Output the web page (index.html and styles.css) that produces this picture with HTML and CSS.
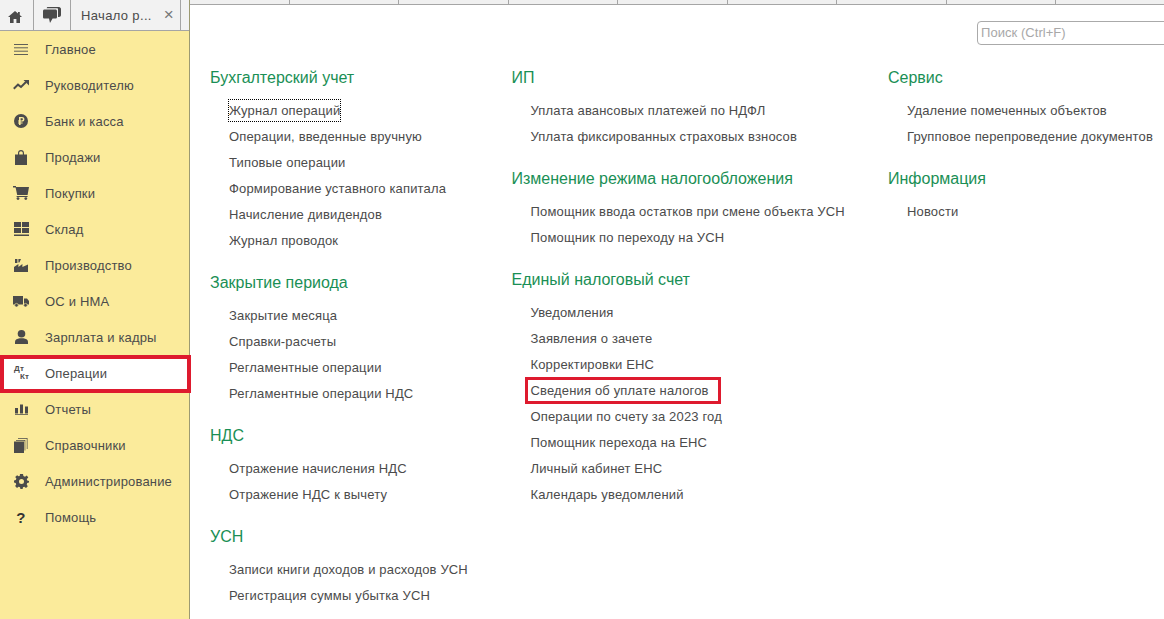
FILE: index.html
```html
<!DOCTYPE html>
<html lang="ru">
<head>
<meta charset="utf-8">
<title>Начало работы</title>
<link rel="stylesheet" href="styles.css">
</head>
<body>
<div class="app">
  <aside class="left">
    <div class="tabs">
      <div class="tab tab-home"><svg width="14" height="12" viewBox="0 0 14 12"><path d="M7 0 0 6H2V12H5.6V8H8.4V12H12V6H14L11.8 4.1V1H10V2.6Z"/></svg></div>
      <div class="tab tab-chat"><svg width="18" height="16" viewBox="0 0 18 16"><path d="M5 0H16C17 0 18 1 18 2V8C18 9 17 10 16 10H15V2.2C15 1.6 14.6 1.2 14 1.2H3.6C3.8 .5 4.3 0 5 0Z"/><path d="M1.6 2.4H12.4C13.4 2.4 14 3 14 4V10C14 11 13.4 11.6 12.4 11.6H9.6L7 16 6 11.6H1.6C.6 11.6 0 11 0 10V4C0 3 .6 2.4 1.6 2.4Z"/></svg></div>
      <div class="tab tab-page"><span>Начало р...</span><span class="tab-close">×</span></div>
    </div>
    <nav class="nav">
      <a class="nav-item"><span class="nav-icon"><svg width="14" height="11" viewBox="0 0 14 11"><path d="M0 .5H14M0 3.8H14M0 7.2H14M0 10.5H14" stroke="#5f5f58" fill="none"/></svg></span>Главное</a>
      <a class="nav-item"><span class="nav-icon"><svg width="16" height="10" viewBox="0 0 16 10"><path d="M.8 8.8 5 4.6 8 7 13 2" fill="none" stroke="#4b4b4b" stroke-width="2"/><path d="M10.5 0H16V5.5Z"/></svg></span>Руководителю</a>
      <a class="nav-item"><span class="nav-icon"><svg width="14" height="14" viewBox="0 0 14 14"><path fill-rule="evenodd" d="M7 0A7 7 0 1 1 7 14 7 7 0 0 1 7 0ZM5 3V6.4H4V7.6H5V8.4H4V9.6H5V11H6.6V9.6H8.6V8.4H6.6V7.6H8C9.5 7.6 10.4 6.7 10.4 5.3 10.4 3.9 9.5 3 8 3ZM6.6 4.3H7.8C8.5 4.3 8.9 4.7 8.9 5.3 8.9 6 8.5 6.4 7.8 6.4H6.6Z"/></svg></span>Банк и касса</a>
      <a class="nav-item"><span class="nav-icon"><svg width="12" height="15" viewBox="0 0 12 15"><path fill-rule="evenodd" d="M0 4.5H3V3C3 1.2 4.2 0 6 0S9 1.2 9 3V4.5H12V15H0ZM4.2 4.5H7.8V3C7.8 2 7 1.2 6 1.2S4.2 2 4.2 3Z"/></svg></span>Продажи</a>
      <a class="nav-item"><span class="nav-icon"><svg width="16" height="14" viewBox="0 0 16 14"><path d="M0 0H3V1H16L14.6 9H4.2L2.6 1.4H0Z"/><path d="M3.6 10H14.6V11H3.6Z"/><circle cx="5" cy="12.6" r="1.4"/><circle cx="12.8" cy="12.6" r="1.4"/></svg></span>Покупки</a>
      <a class="nav-item"><span class="nav-icon"><svg width="15" height="14" viewBox="0 0 15 14"><path d="M0 0H7V5H0ZM8 0H15V5H8ZM0 6H7V11H0ZM8 6H15V11H8ZM0 12.5H15V14H0Z"/></svg></span>Склад</a>
      <a class="nav-item"><span class="nav-icon"><svg width="14" height="13" viewBox="0 0 14 13"><path d="M1 0H3.4V4H1ZM4.4 0H7L5.4 3.4H4.4ZM0 13V8L4.4 5V8L8.4 5V8L14 5.6V13Z"/></svg></span>Производство</a>
      <a class="nav-item"><span class="nav-icon"><svg width="16" height="11" viewBox="0 0 16 11"><path d="M0 0H10V8.6H0ZM11 2.5H14L16 5V8.6H11Z"/><circle cx="3.5" cy="9.2" r="1.8" stroke="#fbeb9b" stroke-width=".6"/><circle cx="12.5" cy="9.2" r="1.8" stroke="#fbeb9b" stroke-width=".6"/></svg></span>ОС и НМА</a>
      <a class="nav-item"><span class="nav-icon"><svg width="13" height="14" viewBox="0 0 13 14"><circle cx="6.5" cy="3.8" r="3.8"/><path d="M0 14V11.5C0 9.6 2.5 8.6 4.5 8.2H8.5C10.5 8.6 13 9.6 13 11.5V14Z"/></svg></span>Зарплата и кадры</a>
      <a class="nav-item nav-active"><span class="nav-icon nav-dtkt"><span>Дт</span><span class="kt">Кт</span></span>Операции</a>
      <a class="nav-item"><span class="nav-icon"><svg width="13" height="12" viewBox="0 0 13 12"><path d="M0 5H3V10.5H0ZM5 1.5H8V10.5H5ZM10 3.5H13V10.5H10ZM0 11.2H13V12H0Z"/></svg></span>Отчеты</a>
      <a class="nav-item"><span class="nav-icon"><svg width="14" height="15" viewBox="0 0 14 15"><path d="M0 3.5H10V15H0Z"/><path d="M2 2H11.3V12.5H10.6V2.7H2ZM4 0H13.5V11H12.8V.7H4Z"/></svg></span>Справочники</a>
      <a class="nav-item"><span class="nav-icon"><svg width="15" height="15" viewBox="0 0 15 15"><path fill-rule="evenodd" d="M6 0H9L9.4 2 11 2.7 12.8 1.6 14.3 3.6 12.8 5 13.2 6.5 15 7V8.4L13.2 9 12.7 10.5 13.8 12.2 12 14 10.3 12.8 9 13.3 8.6 15H6.4L6 13.3 4.6 12.7 3 13.9 1.1 12 2.2 10.4 1.7 9 0 8.6V6.5L1.8 6 2.4 4.6 1.2 3 3.1 1.2 4.6 2.3 5.7 1.9ZM7.5 5A2.5 2.5 0 1 0 7.5 10 2.5 2.5 0 0 0 7.5 5Z"/></svg></span>Администрирование</a>
      <a class="nav-item"><span class="nav-icon nav-q">?</span>Помощь</a>
    </nav>
  </aside>
  <main class="main">
    <div class="strip">
      <i></i><i></i><i></i><i></i><i></i><i></i><i></i><i></i><i></i>
    </div>
    <div class="search-row"><div class="search">Поиск (Ctrl+F)</div></div>
    <div class="columns">
      <div class="col">
        <section class="group"><h2>Бухгалтерский учет</h2>
          <a class="link"><span class="focus">Журнал операций</span></a>
          <a class="link">Операции, введенные вручную</a>
          <a class="link">Типовые операции</a>
          <a class="link">Формирование уставного капитала</a>
          <a class="link">Начисление дивидендов</a>
          <a class="link">Журнал проводок</a>
        </section>
        <section class="group"><h2>Закрытие периода</h2>
          <a class="link">Закрытие месяца</a>
          <a class="link">Справки-расчеты</a>
          <a class="link">Регламентные операции</a>
          <a class="link">Регламентные операции НДС</a>
        </section>
        <section class="group"><h2>НДС</h2>
          <a class="link">Отражение начисления НДС</a>
          <a class="link">Отражение НДС к вычету</a>
        </section>
        <section class="group"><h2>УСН</h2>
          <a class="link">Записи книги доходов и расходов УСН</a>
          <a class="link">Регистрация суммы убытка УСН</a>
        </section>
      </div>
      <div class="col">
        <section class="group"><h2>ИП</h2>
          <a class="link">Уплата авансовых платежей по НДФЛ</a>
          <a class="link">Уплата фиксированных страховых взносов</a>
        </section>
        <section class="group"><h2>Изменение режима налогообложения</h2>
          <a class="link">Помощник ввода остатков при смене объекта УСН</a>
          <a class="link">Помощник по переходу на УСН</a>
        </section>
        <section class="group"><h2>Единый налоговый счет</h2>
          <a class="link">Уведомления</a>
          <a class="link">Заявления о зачете</a>
          <a class="link">Корректировки ЕНС</a>
          <a class="link"><span class="marked">Сведения об уплате налогов</span></a>
          <a class="link">Операции по счету за 2023 год</a>
          <a class="link">Помощник перехода на ЕНС</a>
          <a class="link">Личный кабинет ЕНС</a>
          <a class="link">Календарь уведомлений</a>
        </section>
      </div>
      <div class="col">
        <section class="group"><h2>Сервис</h2>
          <a class="link">Удаление помеченных объектов</a>
          <a class="link">Групповое перепроведение документов</a>
        </section>
        <section class="group"><h2>Информация</h2>
          <a class="link">Новости</a>
        </section>
      </div>
    </div>
  </main>
</div>
</body>
</html>
```
FILE: styles.css
```css
* { box-sizing: border-box; }
html, body { margin: 0; height: 100%; overflow: hidden; }
body { background: #fff; color: #4b4b4b; font-family: "Liberation Sans", Arial, sans-serif; font-size: 13px; }
.app { display: flex; width: 1164px; height: 619px; overflow: hidden; }
.left { width: 189px; flex: none; display: flex; flex-direction: column; }
.tabs { height: 31px; flex: none; display: flex; background: #f2f2f2; border-bottom: 1px solid #a5a5a5; }
.tab { display: flex; align-items: center; justify-content: center; border-right: 1px solid #a5a5a5; }
.tab svg { fill: #4b4b4b; display: block; }
.tab-home { width: 34px; padding: 3px 4px 0 0; }
.tab-chat { width: 37px; }
.tab-page { width: 110px; justify-content: space-between; padding: 0 6px 0 10px; letter-spacing: .35px; }
.tab-close { font-size: 17px; color: #777; }
.nav { flex: 1; background: #fbeb9b; display: flex; flex-direction: column; }
.nav-item { height: 36px; flex: none; display: flex; align-items: center; letter-spacing: .18px; }
.nav-icon { width: 45px; flex: none; display: flex; align-items: center; justify-content: center; padding-right: 3px; }
.nav-icon svg { fill: #4b4b4b; display: block; }
.nav-active { background: #fff; position: relative; }
.nav-active::after { content: ""; position: absolute; top: 0; bottom: -2px; left: 0; right: -2px; border: 4px solid #de1a2e; z-index: 1; }
.nav-dtkt { flex-direction: column; font-size: 8px; font-weight: bold; line-height: 8px; align-items: flex-start; padding: 0 0 0 14px; }
.nav-dtkt .kt { margin-left: 6px; }
.nav-q { font-size: 15px; font-weight: bold; color: #333; }
.main { flex: 1; min-width: 0; border-left: 1px solid #9c9a72; display: flex; flex-direction: column; }
.strip { height: 5px; flex: none; display: flex; background: #f0f0f0; border-bottom: 1px solid #a5a5a5; }
.strip i { width: 109.45px; flex: none; border-right: 1px solid #a5a5a5; }
.strip i:first-child { width: 100px; }
.search-row { display: flex; justify-content: flex-end; margin: 16px -12px 0 0; }
.search { width: 199px; height: 24px; border: 1px solid #aaa; border-radius: 4px; padding: 0 3px; line-height: 22px; color: #a8a8a8; letter-spacing: .05px; }
.columns { display: grid; grid-template-columns: 301.5px 376.5px 1fr; padding: 23px 0 0 20px; }
.group { margin-bottom: 19px; }
.group h2 { margin: 0 0 10px; height: 20px; font-size: 16px; line-height: 20px; font-weight: normal; color: #1a8f55; }
.link { display: block; height: 26px; line-height: 26px; padding-left: 19px; white-space: nowrap; letter-spacing: .16px; }
.focus { outline: 1px dotted #000; padding: 3px 0; }
.marked { outline: 3px solid #de1a2e; outline-offset: 3px; padding-right: 6px; }
```
